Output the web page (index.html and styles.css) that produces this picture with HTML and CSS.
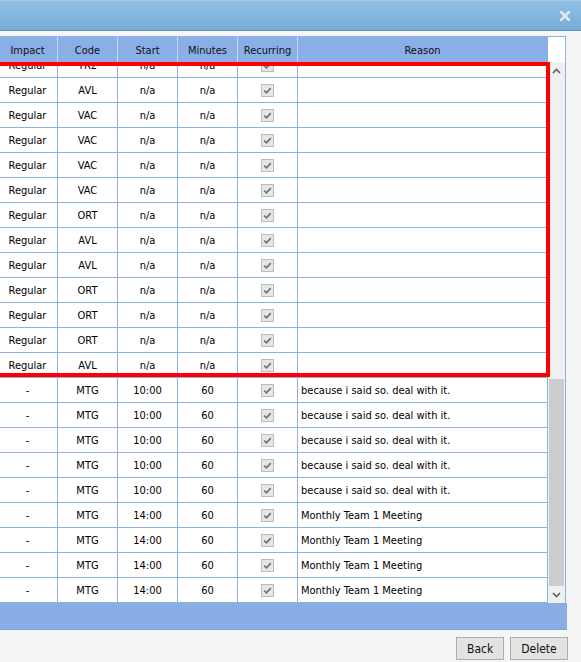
FILE: index.html
```html
<!DOCTYPE html>
<html>
<head>
<meta charset="utf-8">
<link rel="stylesheet" href="styles.css">
</head>
<body>
<div class="titlebar">
  <span class="close"><svg width="10" height="10" viewBox="0 0 10 10"><path d="M1.2 1.2 L8.8 8.8 M8.8 1.2 L1.2 8.8" stroke="#dfeaf5" stroke-width="2.6" stroke-linecap="square"/></svg></span>
</div>
<div class="content">
  <div class="panel">
    <div class="head">
      <div class="hc">Impact</div>
      <div class="hc">Code</div>
      <div class="hc">Start</div>
      <div class="hc">Minutes</div>
      <div class="hc">Recurring</div>
      <div class="hc">Reason</div>
      <div class="hpad"></div>
    </div>
    <div class="bodywrap">
      <div class="rows">
        <div class="rows-inner">
          <div class="row"><div class="c">Regular</div><div class="c">TR2</div><div class="c">n/a</div><div class="c">n/a</div><div class="c"><span class="cb"></span></div><div class="c r"></div></div>
          <div class="row"><div class="c">Regular</div><div class="c">AVL</div><div class="c">n/a</div><div class="c">n/a</div><div class="c"><span class="cb"></span></div><div class="c r"></div></div>
          <div class="row"><div class="c">Regular</div><div class="c">VAC</div><div class="c">n/a</div><div class="c">n/a</div><div class="c"><span class="cb"></span></div><div class="c r"></div></div>
          <div class="row"><div class="c">Regular</div><div class="c">VAC</div><div class="c">n/a</div><div class="c">n/a</div><div class="c"><span class="cb"></span></div><div class="c r"></div></div>
          <div class="row"><div class="c">Regular</div><div class="c">VAC</div><div class="c">n/a</div><div class="c">n/a</div><div class="c"><span class="cb"></span></div><div class="c r"></div></div>
          <div class="row"><div class="c">Regular</div><div class="c">VAC</div><div class="c">n/a</div><div class="c">n/a</div><div class="c"><span class="cb"></span></div><div class="c r"></div></div>
          <div class="row"><div class="c">Regular</div><div class="c">ORT</div><div class="c">n/a</div><div class="c">n/a</div><div class="c"><span class="cb"></span></div><div class="c r"></div></div>
          <div class="row"><div class="c">Regular</div><div class="c">AVL</div><div class="c">n/a</div><div class="c">n/a</div><div class="c"><span class="cb"></span></div><div class="c r"></div></div>
          <div class="row"><div class="c">Regular</div><div class="c">AVL</div><div class="c">n/a</div><div class="c">n/a</div><div class="c"><span class="cb"></span></div><div class="c r"></div></div>
          <div class="row"><div class="c">Regular</div><div class="c">ORT</div><div class="c">n/a</div><div class="c">n/a</div><div class="c"><span class="cb"></span></div><div class="c r"></div></div>
          <div class="row"><div class="c">Regular</div><div class="c">ORT</div><div class="c">n/a</div><div class="c">n/a</div><div class="c"><span class="cb"></span></div><div class="c r"></div></div>
          <div class="row"><div class="c">Regular</div><div class="c">ORT</div><div class="c">n/a</div><div class="c">n/a</div><div class="c"><span class="cb"></span></div><div class="c r"></div></div>
          <div class="row"><div class="c">Regular</div><div class="c">AVL</div><div class="c">n/a</div><div class="c">n/a</div><div class="c"><span class="cb"></span></div><div class="c r"></div></div>
          <div class="row"><div class="c">-</div><div class="c">MTG</div><div class="c">10:00</div><div class="c">60</div><div class="c"><span class="cb"></span></div><div class="c r">because i said so. deal with it.</div></div>
          <div class="row"><div class="c">-</div><div class="c">MTG</div><div class="c">10:00</div><div class="c">60</div><div class="c"><span class="cb"></span></div><div class="c r">because i said so. deal with it.</div></div>
          <div class="row"><div class="c">-</div><div class="c">MTG</div><div class="c">10:00</div><div class="c">60</div><div class="c"><span class="cb"></span></div><div class="c r">because i said so. deal with it.</div></div>
          <div class="row"><div class="c">-</div><div class="c">MTG</div><div class="c">10:00</div><div class="c">60</div><div class="c"><span class="cb"></span></div><div class="c r">because i said so. deal with it.</div></div>
          <div class="row"><div class="c">-</div><div class="c">MTG</div><div class="c">10:00</div><div class="c">60</div><div class="c"><span class="cb"></span></div><div class="c r">because i said so. deal with it.</div></div>
          <div class="row"><div class="c">-</div><div class="c">MTG</div><div class="c">14:00</div><div class="c">60</div><div class="c"><span class="cb"></span></div><div class="c r">Monthly Team 1 Meeting</div></div>
          <div class="row"><div class="c">-</div><div class="c">MTG</div><div class="c">14:00</div><div class="c">60</div><div class="c"><span class="cb"></span></div><div class="c r">Monthly Team 1 Meeting</div></div>
          <div class="row"><div class="c">-</div><div class="c">MTG</div><div class="c">14:00</div><div class="c">60</div><div class="c"><span class="cb"></span></div><div class="c r">Monthly Team 1 Meeting</div></div>
          <div class="row"><div class="c">-</div><div class="c">MTG</div><div class="c">14:00</div><div class="c">60</div><div class="c"><span class="cb"></span></div><div class="c r">Monthly Team 1 Meeting</div></div>
        </div>
      </div>
      <div class="vscroll">
        <div class="sbtn"><svg width="9" height="6" viewBox="0 0 9 6"><path d="M1 5 L4.5 1.5 L8 5" fill="none" stroke="#5f5f5f" stroke-width="1.6"/></svg></div>
        <div class="track"><div class="thumb"></div></div>
        <div class="sbtn"><svg width="9" height="6" viewBox="0 0 9 6"><path d="M1 1 L4.5 4.5 L8 1" fill="none" stroke="#5f5f5f" stroke-width="1.6"/></svg></div>
      </div>
    </div>
  </div>
  <div class="footer"></div>
  <div class="actions">
    <button class="btn">Back</button>
    <button class="btn">Delete</button>
  </div>
</div>
<div class="highlight"></div>
</body>
</html>
```

FILE: styles.css
```css
html, body {
  margin: 0;
  padding: 0;
}
body {
  background: #f5f5f5;
  font-family: "DejaVu Sans Condensed", "Liberation Sans", sans-serif;
  font-size: 11px;
  color: #000;
  width: 581px;
  height: 662px;
  overflow: hidden;
  position: relative;
}
.titlebar {
  height: 29px;
  border-top: 1px solid #a7cbe9;
  background: linear-gradient(#90bee1 0%, #86b7de 45%, #74abd6 100%);
  border-bottom: 1px solid #5f96c7;
  display: flex;
  align-items: center;
  justify-content: flex-end;
  padding-right: 11px;
}
.close {
  display: flex;
  margin-top: 1px;
}
.content {
  padding-top: 5px;
}
.panel {
  margin-left: -3px;
  width: 569px;
  box-sizing: border-box;
  border: 1px solid #8db1e0;
  border-bottom: none;
  background: #fff;
}
.head {
  display: grid;
  grid-template-columns: 60px 60px 60px 60px 60px 250px 17px;
  height: 25px;
}
.hc {
  background: #8aaee6;
  border-right: 1px solid #c9d9f2;
  display: flex;
  align-items: center;
  justify-content: center;
  padding-top: 2px;
  box-sizing: border-box;
  color: #111;
}
.hc:nth-child(6) {
  border-right: 1px solid #8aaee6;
}
.hpad {
  background: #fff;
}
.bodywrap {
  display: flex;
  height: 541px;
}
.rows {
  width: 550px;
  overflow: hidden;
}
.rows-inner {
  margin-top: -9px;
}
.row {
  display: grid;
  grid-template-columns: 60px 60px 60px 60px 60px 250px;
  height: 25px;
}
.c {
  box-sizing: border-box;
  border-right: 1px solid #8db1e0;
  border-bottom: 1px solid #8db1e0;
  display: flex;
  align-items: center;
  justify-content: center;
  padding-top: 1px;
  white-space: nowrap;
}
.c.r {
  justify-content: flex-start;
  padding-left: 3px;
}
.cb {
  width: 13px;
  height: 13px;
  margin-top: -1px;
  box-sizing: border-box;
  border: 1px solid #bcbcbc;
  background: #e6e6e6 url("data:image/svg+xml,%3Csvg xmlns='http://www.w3.org/2000/svg' width='11' height='11' viewBox='0 0 11 11'%3E%3Cpath d='M2.2 5.6 L4.4 7.8 L8.8 3.2' fill='none' stroke='%23737373' stroke-width='1.7'/%3E%3C/svg%3E") no-repeat center;
}
.vscroll {
  width: 17px;
  background: #f0f0f0;
  display: flex;
  flex-direction: column;
}
.sbtn {
  height: 17px;
  display: flex;
  align-items: center;
  justify-content: center;
}
.track {
  flex: 1;
  display: flex;
  flex-direction: column;
  justify-content: flex-end;
}
.thumb {
  height: 207px;
  margin: 0 1px 0 1px;
  background: #cdcdcd;
}
.footer {
  margin-left: -3px;
  width: 570px;
  height: 26px;
  background: #8aaee4;
  border-bottom: 1px solid #7ea4d9;
}
.actions {
  display: flex;
  justify-content: flex-end;
  gap: 6px;
  padding: 7px 13px 0 0;
}
.btn {
  height: 23px;
  padding: 0 10px;
  box-sizing: border-box;
  border: 1px solid #adadad;
  background: #e3e3e3;
  font-family: "DejaVu Sans Condensed", "Liberation Sans", sans-serif;
  font-size: 12px;
  color: #111;
  border-radius: 0;
}
.btn:first-child {
  width: 48px;
}
.btn:last-child {
  width: 58px;
}
.highlight {
  position: absolute;
  left: -10px;
  top: 62px;
  width: 560px;
  height: 315px;
  box-sizing: border-box;
  border: 4px solid #ff0000;
  pointer-events: none;
}
```
